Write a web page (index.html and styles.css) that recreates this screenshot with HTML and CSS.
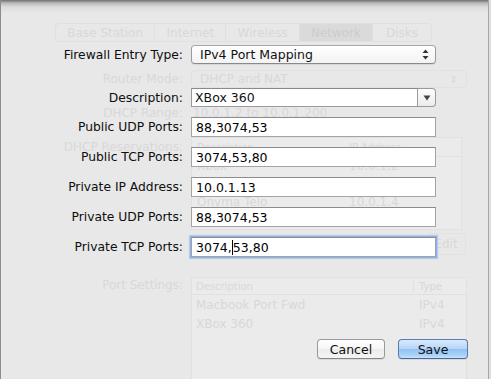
FILE: index.html
```html
<!DOCTYPE html>
<html lang="en">

<head>
    <title>Port Mapping</title>
    <meta charset="utf-8">
    <meta name="viewport" content="width=device-width, initial-scale=1">
    <link rel="stylesheet" href="styles.css">
</head>

<body>
    <div id="window">
        <!-- faded settings page behind the sheet -->
        <div id="backdrop">
            <div class="ghost_tabs">
                <span class="ghost_tab" style="width: 100px">Base Station</span>
                <span class="ghost_tab" style="width: 71px">Internet</span>
                <span class="ghost_tab" style="width: 74px">Wireless</span>
                <span class="ghost_tab ghost_tab-selected" style="width: 73px">Network</span>
                <span class="ghost_tab" style="width: 59px">Disks</span>
            </div>
            <div class="ghost_row ghost_router">
                <span class="ghost_label">Router Mode:</span>
                <span class="ghost_popup">DHCP and NAT <span class="ghost_arrows">&#8661;</span></span>
            </div>
            <div class="ghost_row ghost_range">
                <span class="ghost_label">DHCP Range:</span>
                <span class="ghost_text">10.0.1.2 to 10.0.1.200</span>
            </div>
            <div class="ghost_row ghost_reservations">
                <span class="ghost_label">DHCP Reservations:</span>
                <div class="ghost_table ghost_table-reservations">
                    <div class="ghost_table-row ghost_table-head"><span class="ghost_cell-name">Description</span><span>IP Address</span></div>
                    <div class="ghost_table-row"><span class="ghost_cell-name">Xbox</span><span>10.0.1.2</span></div>
                    <div class="ghost_table-row"><span class="ghost_cell-name">iPhone</span><span>10.0.1.3</span></div>
                    <div class="ghost_table-row"><span class="ghost_cell-name">Onyma Telo</span><span>10.0.1.4</span></div>
                    <div class="ghost_table-row"><span class="ghost_cell-name">Macbook</span><span>10.0.1.5</span></div>
                </div>
            </div>
            <div class="ghost_edit-row">
                <span class="ghost_button">Edit</span>
            </div>
            <div class="ghost_row ghost_ports">
                <span class="ghost_label">Port Settings:</span>
                <div class="ghost_table ghost_table-ports">
                    <div class="ghost_table-row ghost_table-head"><span class="ghost_cell-desc">Description</span><span class="ghost_cell-type">Type</span></div>
                    <div class="ghost_table-row"><span class="ghost_cell-desc">Macbook Port Fwd</span><span class="ghost_cell-type">IPv4</span></div>
                    <div class="ghost_table-row"><span class="ghost_cell-desc">XBox 360</span><span class="ghost_cell-type">IPv4</span></div>
                </div>
            </div>
        </div>

        <!-- the port mapping sheet -->
        <div id="sheet">
            <div class="sheet_row sheet_row-type">
                <label class="sheet_label">Firewall Entry Type:</label>
                <div class="sheet_popup">
                    <span>IPv4 Port Mapping</span>
                    <svg class="sheet_popup-arrows" width="7" height="11" viewBox="0 0 7 11">
                        <path d="M3.5 0.5 L6.5 4 L0.5 4 Z M0.5 7 L6.5 7 L3.5 10.5 Z" fill="#333"/>
                    </svg>
                </div>
            </div>
            <div class="sheet_row sheet_row-combo">
                <label class="sheet_label">Description:</label>
                <div class="sheet_combo">
                    <span class="sheet_combo-text">XBox 360</span>
                    <span class="sheet_combo-button">
                        <svg width="8" height="6" viewBox="0 0 8 6"><path d="M0.5 0.5 L7.5 0.5 L4 5.5 Z" fill="#444"/></svg>
                    </span>
                </div>
            </div>
            <div class="sheet_row">
                <label class="sheet_label">Public UDP Ports:</label>
                <div class="sheet_field">88,3074,53</div>
            </div>
            <div class="sheet_row">
                <label class="sheet_label">Public TCP Ports:</label>
                <div class="sheet_field">3074,53,80</div>
            </div>
            <div class="sheet_row">
                <label class="sheet_label">Private IP Address:</label>
                <div class="sheet_field">10.0.1.13</div>
            </div>
            <div class="sheet_row">
                <label class="sheet_label">Private UDP Ports:</label>
                <div class="sheet_field">88,3074,53</div>
            </div>
            <div class="sheet_row">
                <label class="sheet_label">Private TCP Ports:</label>
                <div class="sheet_field sheet_field-focused">3074,<span class="sheet_caret"></span>53,80</div>
            </div>
            <div class="sheet_buttons">
                <button class="sheet_button">Cancel</button>
                <button class="sheet_button sheet_button-default">Save</button>
            </div>
        </div>
    </div>
</body>

</html>
```

FILE: styles.css
```css
body {
    margin: 0;
    background: #dedede;
    font-family: "DejaVu Sans", sans-serif;
    font-size: 12px;
    color: #111;
}

#window {
    display: grid;
    width: 487px;
    height: 379px;
    overflow: hidden;
    border-left: 1px solid #8c8c8c;
    border-right: 1px solid #a6a6a6;
    background: linear-gradient(#6f6f6f 0, #b9b9b9 3px, #dcdcdc 7px, #e8e8e8 13px) no-repeat;
    background-color: #e8e8e8;
}

#backdrop,
#sheet {
    grid-area: 1 / 1;
}

/* ---- faded page behind ---- */

#backdrop {
    color: #d8d8d8;
    font-size: 12px;
}

.ghost_tabs {
    display: flex;
    margin: 23px 0 0 54px;
    height: 19px;
    width: 377px;
    border: 1px solid #e0e0e0;
    border-radius: 4px;
    box-sizing: border-box;
}

.ghost_tab {
    display: flex;
    align-items: center;
    justify-content: center;
    border-right: 1px solid #e0e0e0;
}

.ghost_tab:last-child {
    border-right: none;
}

.ghost_tab-selected {
    background: #dadada;
    color: #cdcdcd;
}

.ghost_row {
    display: flex;
    align-items: flex-start;
}

.ghost_label {
    width: 190px;
    text-align: right;
    padding-right: 8px;
    box-sizing: border-box;
    flex: none;
}

.ghost_router {
    margin-top: 28px;
    align-items: center;
}

.ghost_popup {
    display: flex;
    align-items: center;
    justify-content: space-between;
    width: 276px;
    height: 18px;
    padding: 0 8px;
    box-sizing: border-box;
    border: 1px solid #e1e1e1;
    border-radius: 4px;
}

.ghost_arrows {
    font-size: 10px;
}

.ghost_range {
    margin-top: 18px;
}

.ghost_text {
    padding-left: 2px;
}

.ghost_reservations {
    margin-top: 17px;
}

.ghost_reservations .ghost_label {
    margin-top: 3px;
}

.ghost_table {
    border: 1px solid #e1e1e1;
    background: #ebebeb;
    box-sizing: border-box;
}

.ghost_table-reservations {
    width: 271px;
}

.ghost_table-row {
    display: flex;
    height: 18px;
    align-items: center;
    padding-left: 5px;
}

.ghost_table-head {
    border-bottom: 1px solid #e1e1e1;
    font-size: 10px;
}

.ghost_cell-name {
    width: 152px;
}

.ghost_edit-row {
    display: flex;
    justify-content: flex-end;
    padding-right: 22px;
    margin-top: 3px;
}

.ghost_button {
    width: 38px;
    height: 20px;
    display: flex;
    align-items: center;
    justify-content: center;
    border: 1px solid #e1e1e1;
    border-radius: 4px;
}

.ghost_ports {
    margin-top: 22px;
}

.ghost_ports .ghost_label {
    margin-top: 1px;
}

.ghost_table-ports {
    width: 276px;
    height: 120px;
}

.ghost_table-ports .ghost_table-row {
    height: 19px;
    padding-left: 4px;
}

.ghost_table-ports .ghost_table-head {
    height: 16px;
}

.ghost_cell-desc {
    width: 217px;
    border-right: 1px solid transparent;
}

.ghost_table-head .ghost_cell-desc {
    border-right-color: #e1e1e1;
}

.ghost_cell-type {
    padding-left: 5px;
}

/* ---- sheet ---- */

#sheet {
    display: flex;
    flex-direction: column;
    padding-top: 45px;
}

.sheet_row {
    display: flex;
    align-items: center;
    height: 20px;
    margin-bottom: 10px;
}

.sheet_label {
    width: 190px;
    padding-right: 8px;
    box-sizing: border-box;
    text-align: right;
    font-size: 12.3px;
    color: #0e0e0e;
}

.sheet_row-type {
    height: 19px;
    margin-bottom: 24px;
}

.sheet_row-combo {
    height: 19px;
}

.sheet_popup {
    display: flex;
    align-items: center;
    justify-content: space-between;
    width: 245px;
    height: 19px;
    box-sizing: border-box;
    padding: 0 6px 0 8px;
    border: 1px solid #9c9c9c;
    border-top-color: #a8a8a8;
    border-bottom-color: #8a8a8a;
    border-radius: 4px;
    background: linear-gradient(#ffffff, #f3f3f3);
    box-shadow: 0 1px 1px rgba(0, 0, 0, 0.08);
    font-size: 12.5px;
}

.sheet_combo {
    display: flex;
    width: 245px;
    height: 19px;
}

.sheet_combo-text {
    flex: 1;
    display: flex;
    align-items: center;
    padding-left: 3px;
    background: #fff;
    border: 1px solid #9a9a9a;
    border-top-color: #8a8a8a;
    font-size: 12.5px;
}

.sheet_combo-button {
    width: 17px;
    display: flex;
    align-items: center;
    justify-content: center;
    border: 1px solid #9a9a9a;
    border-left: none;
    border-radius: 0 4px 4px 0;
    background: linear-gradient(#fdfdfd, #ececec);
}

.sheet_field {
    display: flex;
    align-items: center;
    width: 245px;
    height: 20px;
    box-sizing: border-box;
    padding-left: 4px;
    background: #fff;
    border: 1px solid #a4a4a4;
    border-top-color: #8c8c8c;
    font-size: 12.5px;
    color: #000;
}

.sheet_field-focused {
    box-shadow: 0 0 0 1px #8db3e6, 0 0 1px 2px #b3cdf0;
}

.sheet_caret {
    width: 1px;
    height: 15px;
    background: #000;
}

.sheet_buttons {
    display: flex;
    justify-content: flex-end;
    gap: 13px;
    margin-top: 72px;
    padding-right: 20px;
}

.sheet_button {
    width: 68px;
    height: 20px;
    padding: 0;
    font-family: "DejaVu Sans", sans-serif;
    font-size: 12.5px;
    color: #111;
    border: 1px solid #9a9a9a;
    border-bottom-color: #858585;
    border-radius: 4px;
    background: linear-gradient(#ffffff, #f6f6f6 50%, #ececec 51%, #f4f4f4);
    box-shadow: 0 1px 1px rgba(0, 0, 0, 0.08);
}

.sheet_button-default {
    width: 70px;
    border-color: #5a7bb0;
    border-bottom-color: #4a6796;
    background: linear-gradient(#d8eafc, #b5d5f8 50%, #92c1f2 51%, #a9d2fb 85%, #c7e4ff);
}
```
